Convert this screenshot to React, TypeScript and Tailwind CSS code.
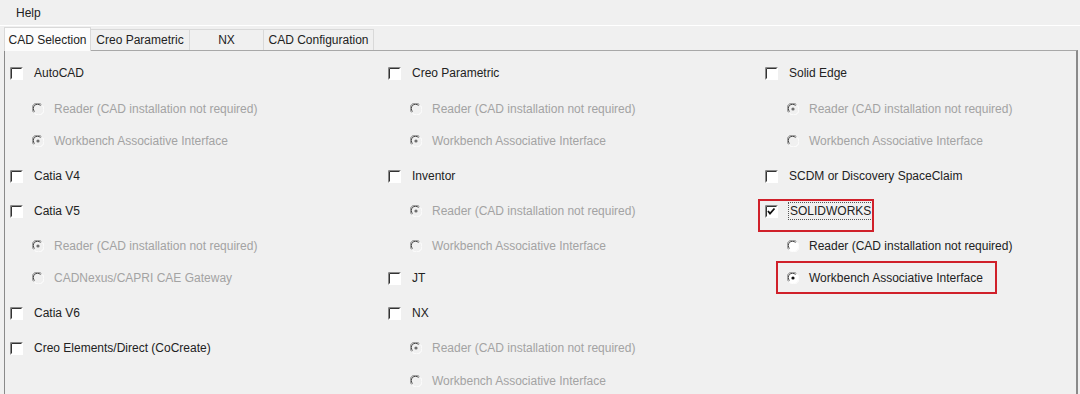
import React from 'react';

type Item =
  | { kind: 'check'; label: string; checked?: boolean; focus?: boolean; highlight?: boolean }
  | { kind: 'radio'; label: string; selected?: boolean; disabled?: boolean; highlight?: boolean };

const col1: Item[] = [
  { kind: 'check', label: 'AutoCAD' },
  { kind: 'radio', label: 'Reader (CAD installation not required)', disabled: true },
  { kind: 'radio', label: 'Workbench Associative Interface', disabled: true, selected: true },
  { kind: 'check', label: 'Catia V4' },
  { kind: 'check', label: 'Catia V5' },
  { kind: 'radio', label: 'Reader (CAD installation not required)', disabled: true, selected: true },
  { kind: 'radio', label: 'CADNexus/CAPRI CAE Gateway', disabled: true },
  { kind: 'check', label: 'Catia V6' },
  { kind: 'check', label: 'Creo Elements/Direct (CoCreate)' },
];

const col2: Item[] = [
  { kind: 'check', label: 'Creo Parametric' },
  { kind: 'radio', label: 'Reader (CAD installation not required)', disabled: true },
  { kind: 'radio', label: 'Workbench Associative Interface', disabled: true, selected: true },
  { kind: 'check', label: 'Inventor' },
  { kind: 'radio', label: 'Reader (CAD installation not required)', disabled: true, selected: true },
  { kind: 'radio', label: 'Workbench Associative Interface', disabled: true },
  { kind: 'check', label: 'JT' },
  { kind: 'check', label: 'NX' },
  { kind: 'radio', label: 'Reader (CAD installation not required)', disabled: true, selected: true },
  { kind: 'radio', label: 'Workbench Associative Interface', disabled: true },
];

const col3: Item[] = [
  { kind: 'check', label: 'Solid Edge' },
  { kind: 'radio', label: 'Reader (CAD installation not required)', disabled: true, selected: true },
  { kind: 'radio', label: 'Workbench Associative Interface', disabled: true },
  { kind: 'check', label: 'SCDM or Discovery SpaceClaim' },
  { kind: 'check', label: 'SOLIDWORKS', checked: true, focus: true, highlight: true },
  { kind: 'radio', label: 'Reader (CAD installation not required)' },
  { kind: 'radio', label: 'Workbench Associative Interface', selected: true, highlight: true },
];

// classic sunken checkbox: dark top/left edges, white face
const CheckBox = ({ checked }: { checked?: boolean }) => (
  <svg width="13" height="13" viewBox="0 0 13 13" className="shrink-0">
    <rect x="0" y="0" width="13" height="13" fill="#ffffff" />
    <path d="M0.5 12.5V0.5H12.5" stroke="#8a8a8a" fill="none" />
    <path d="M1.5 11.5V1.5H11.5" stroke="#333333" fill="none" />
    {checked && <path d="M3 6l2 2.5 4.5-5" stroke="#111" strokeWidth="1.8" fill="none" />}
  </svg>
);

const Radio = ({ selected, disabled }: { selected?: boolean; disabled?: boolean }) => (
  <svg width="12" height="12" viewBox="0 0 12 12" className="shrink-0">
    <circle cx="6" cy="6" r="5.5" fill={disabled ? '#f0f0f0' : '#ffffff'} />
    <path d="M1.6 9.4A5 5 0 0 1 9.4 1.6" stroke="#808080" strokeWidth="1" fill="none" />
    <path d="M2.5 8.5A3.8 3.8 0 0 1 8.5 2.5" stroke="#404040" strokeWidth="1" fill="none" />
    <path d="M10.4 2.6A5 5 0 0 1 2.6 10.4" stroke="#ffffff" strokeWidth="1" fill="none" />
    {selected && <circle cx="6" cy="6" r="1.6" fill={disabled ? '#6e6e6e' : '#111111'} />}
  </svg>
);

const Row = ({ item }: { item: Item }) => {
  if (item.kind === 'check') {
    return (
      <div className="relative flex h-4 items-center">
        {item.highlight && (
          <div className="pointer-events-none absolute -left-[7px] -top-[4px] h-[33px] w-[116px] border-2 border-[#d0202a]" />
        )}
        <CheckBox checked={item.checked} />
        <span
          className={
            item.focus
              ? 'ml-[10px] border border-dotted border-[#555] px-[1px] text-[#222]'
              : 'ml-[11px] text-[#222]'
          }
        >
          {item.label}
        </span>
      </div>
    );
  }
  return (
    <div className="relative ml-[22px] flex h-4 items-center">
      {item.highlight && (
        <div className="pointer-events-none absolute -left-[11px] -top-[9px] h-[33px] w-[221px] border-2 border-[#d0202a]" />
      )}
      <Radio selected={item.selected} disabled={item.disabled} />
      <span className={item.disabled ? 'ml-[10px] text-[#a3a3a3]' : 'ml-[10px] text-[#222]'}>
        {item.label}
      </span>
    </div>
  );
};

const Column = ({ items }: { items: Item[] }) => (
  <div className="grid grid-rows-[36px_32px_35px_35px_35px_32px_35px_35px_33px_20px]">
    {items.map((it, i) => (
      <Row key={i} item={it} />
    ))}
  </div>
);

const tabs = ['CAD Selection', 'Creo Parametric', 'NX', 'CAD Configuration'];
const tabWidths = ['w-[87px]', 'w-[100px]', 'w-[75px]', 'w-[111px]'];

export default function App() {
  return (
    <div className="h-[394px] w-[1080px] overflow-hidden bg-[#f0f0f0] text-[12px] leading-4 text-[#222] [font-family:'Liberation_Sans',Arial,sans-serif]">
      {/* menu bar */}
      <div className="flex h-[26px] items-center border-b border-white pl-[16px]">
        <span>Help</span>
      </div>

      {/* tabs */}
      <div className="flex h-[24px] items-end pl-[4px]">
        {tabs.map((t, i) =>
          i === 0 ? (
            <div
              key={t}
              className={`relative z-10 -mb-px flex h-[24px] items-center justify-center border border-b-0 border-[#d9d9d9] bg-[#fcfcfc] ${tabWidths[i]}`}
            >
              {t}
            </div>
          ) : (
            <div
              key={t}
              className={`-ml-px flex h-[21px] items-center justify-center border border-b-0 border-[#d9d9d9] bg-[#f0f0f0] ${tabWidths[i]}`}
            >
              {t}
            </div>
          )
        )}
      </div>

      {/* panel */}
      <div className="ml-[4px] h-[400px] w-[1074px] border border-r-2 border-[#a8a8a8] border-l-[#8a8a8a] border-r-[#8a8a8a] bg-[#f0f0f0] pl-[5px] pt-[14px]">
        <div className="grid grid-cols-[378px_377px_1fr]">
          <Column items={col1} />
          <Column items={col2} />
          <Column items={col3} />
        </div>
      </div>
    </div>
  );
}
